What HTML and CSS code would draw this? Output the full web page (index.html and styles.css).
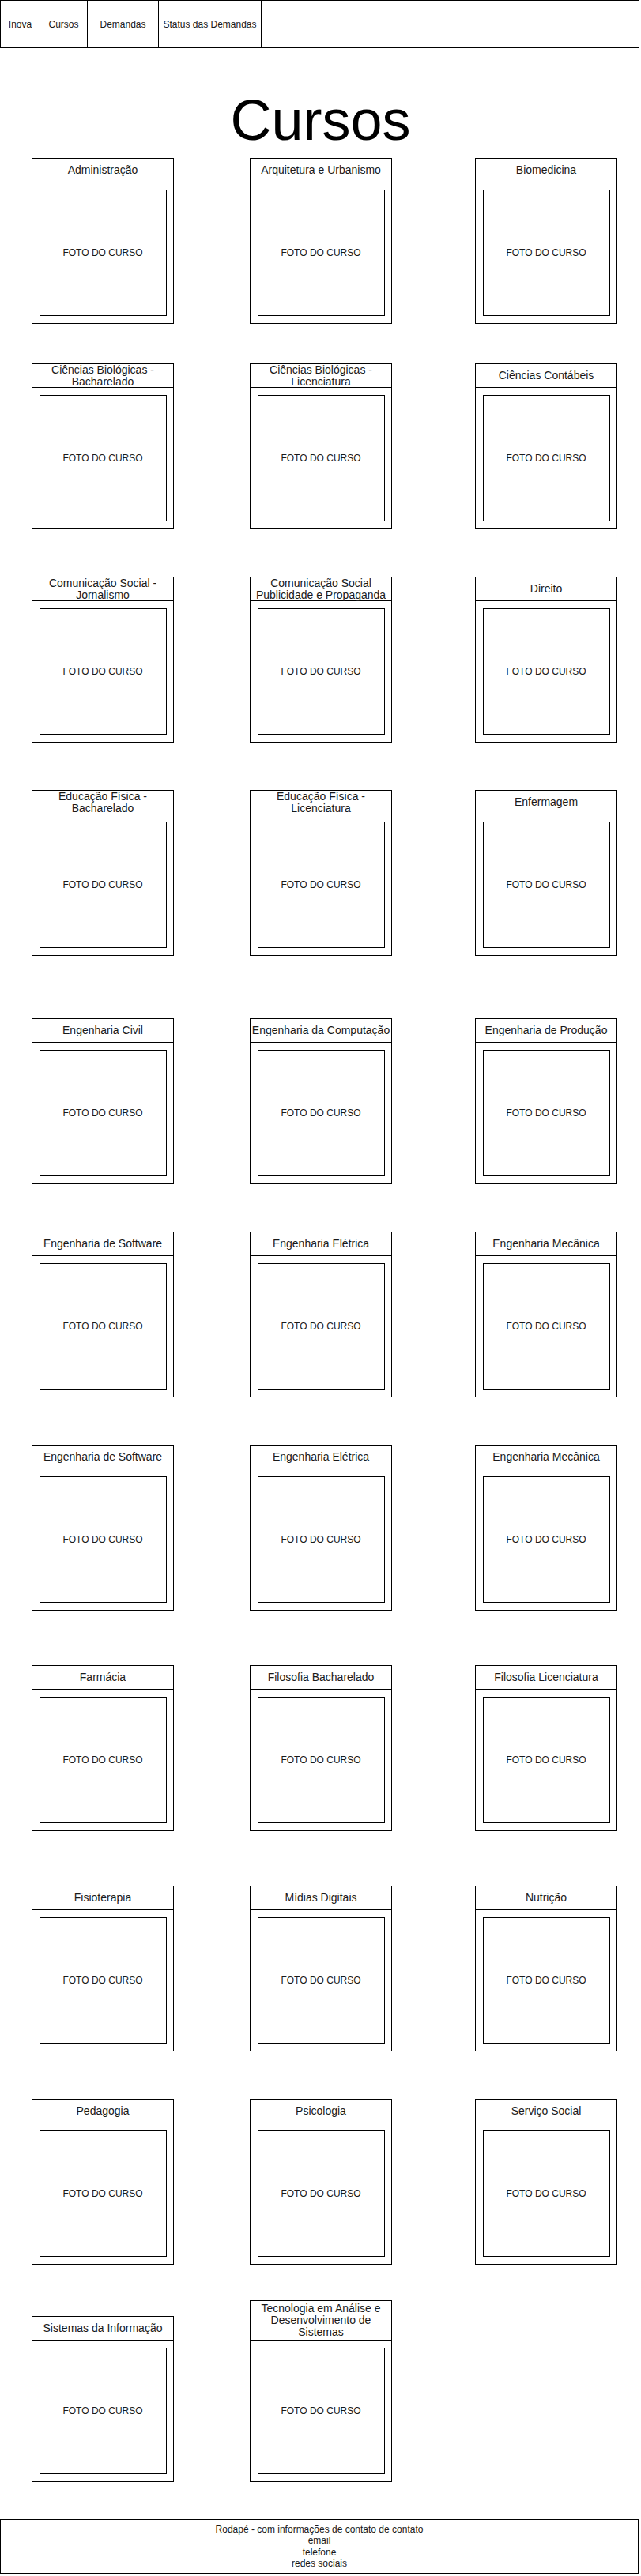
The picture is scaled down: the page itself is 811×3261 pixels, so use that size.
FILE: index.html
```html
<!DOCTYPE html>
<html lang="pt-BR">
<head>
<meta charset="utf-8">
<title>Cursos</title>
<link rel="stylesheet" href="styles.css">
</head>
<body>
<div class="topnav">
	<a class="navitem nav-inova" href="#">Inova</a>
	<a class="navitem nav-cursos" href="#">Cursos</a>
	<a class="navitem nav-demandas" href="#">Demandas</a>
	<a class="navitem nav-status" href="#">Status das Demandas</a>
	<div class="navitem nav-rest"></div>
</div>

<h1 class="pagetitle">Cursos</h1>

<!-- lista de cursos, tres por linha -->
<div class="row first">
	<div class="card"><div class="card-head">Administração</div><div class="card-body"><div class="photo">FOTO DO CURSO</div></div></div>
	<div class="card"><div class="card-head">Arquitetura e Urbanismo</div><div class="card-body"><div class="photo">FOTO DO CURSO</div></div></div>
	<div class="card"><div class="card-head">Biomedicina</div><div class="card-body"><div class="photo">FOTO DO CURSO</div></div></div>
</div>
<div class="row near">
	<div class="card"><div class="card-head">Ciências Biológicas - Bacharelado</div><div class="card-body"><div class="photo">FOTO DO CURSO</div></div></div>
	<div class="card"><div class="card-head">Ciências Biológicas - Licenciatura</div><div class="card-body"><div class="photo">FOTO DO CURSO</div></div></div>
	<div class="card"><div class="card-head">Ciências Contábeis</div><div class="card-body"><div class="photo">FOTO DO CURSO</div></div></div>
</div>
<div class="row">
	<div class="card"><div class="card-head">Comunicação Social - Jornalismo</div><div class="card-body"><div class="photo">FOTO DO CURSO</div></div></div>
	<div class="card"><div class="card-head">Comunicação Social Publicidade e Propaganda</div><div class="card-body"><div class="photo">FOTO DO CURSO</div></div></div>
	<div class="card"><div class="card-head">Direito</div><div class="card-body"><div class="photo">FOTO DO CURSO</div></div></div>
</div>
<div class="row">
	<div class="card"><div class="card-head">Educação Física - Bacharelado</div><div class="card-body"><div class="photo">FOTO DO CURSO</div></div></div>
	<div class="card"><div class="card-head">Educação Física - Licenciatura</div><div class="card-body"><div class="photo">FOTO DO CURSO</div></div></div>
	<div class="card"><div class="card-head">Enfermagem</div><div class="card-body"><div class="photo">FOTO DO CURSO</div></div></div>
</div>
<div class="row far">
	<div class="card"><div class="card-head">Engenharia Civil</div><div class="card-body"><div class="photo">FOTO DO CURSO</div></div></div>
	<div class="card"><div class="card-head">Engenharia da Computação</div><div class="card-body"><div class="photo">FOTO DO CURSO</div></div></div>
	<div class="card"><div class="card-head">Engenharia de Produção</div><div class="card-body"><div class="photo">FOTO DO CURSO</div></div></div>
</div>
<div class="row">
	<div class="card"><div class="card-head">Engenharia de Software</div><div class="card-body"><div class="photo">FOTO DO CURSO</div></div></div>
	<div class="card"><div class="card-head">Engenharia Elétrica</div><div class="card-body"><div class="photo">FOTO DO CURSO</div></div></div>
	<div class="card"><div class="card-head">Engenharia Mecânica</div><div class="card-body"><div class="photo">FOTO DO CURSO</div></div></div>
</div>
<div class="row">
	<div class="card"><div class="card-head">Engenharia de Software</div><div class="card-body"><div class="photo">FOTO DO CURSO</div></div></div>
	<div class="card"><div class="card-head">Engenharia Elétrica</div><div class="card-body"><div class="photo">FOTO DO CURSO</div></div></div>
	<div class="card"><div class="card-head">Engenharia Mecânica</div><div class="card-body"><div class="photo">FOTO DO CURSO</div></div></div>
</div>
<div class="row wide">
	<div class="card"><div class="card-head">Farmácia</div><div class="card-body"><div class="photo">FOTO DO CURSO</div></div></div>
	<div class="card"><div class="card-head">Filosofia Bacharelado</div><div class="card-body"><div class="photo">FOTO DO CURSO</div></div></div>
	<div class="card"><div class="card-head">Filosofia Licenciatura</div><div class="card-body"><div class="photo">FOTO DO CURSO</div></div></div>
</div>
<div class="row wide">
	<div class="card"><div class="card-head">Fisioterapia</div><div class="card-body"><div class="photo">FOTO DO CURSO</div></div></div>
	<div class="card"><div class="card-head">Mídias Digitais</div><div class="card-body"><div class="photo">FOTO DO CURSO</div></div></div>
	<div class="card"><div class="card-head">Nutrição</div><div class="card-body"><div class="photo">FOTO DO CURSO</div></div></div>
</div>
<div class="row">
	<div class="card"><div class="card-head">Pedagogia</div><div class="card-body"><div class="photo">FOTO DO CURSO</div></div></div>
	<div class="card"><div class="card-head">Psicologia</div><div class="card-body"><div class="photo">FOTO DO CURSO</div></div></div>
	<div class="card"><div class="card-head">Serviço Social</div><div class="card-body"><div class="photo">FOTO DO CURSO</div></div></div>
</div>
<div class="row last">
	<div class="card"><div class="card-head">Sistemas da Informação</div><div class="card-body"><div class="photo">FOTO DO CURSO</div></div></div>
	<div class="card"><div class="card-head tall">Tecnologia em Análise e Desenvolvimento de Sistemas</div><div class="card-body"><div class="photo">FOTO DO CURSO</div></div></div>
</div>

<div class="footer">
	Rodapé - com informações de contato de contato<br>
	email<br>
	telefone<br>
	redes sociais
</div>
</body>
</html>
```

FILE: styles.css
```css
html, body {
    margin: 0;
    padding: 0;
    background: #ffffff;
}
body {
    font-family: "Liberation Sans", Arial, Helvetica, sans-serif;
    color: #1a1a1a;
}

/* barra de navegacao */
.topnav {
    display: flex;
    box-sizing: border-box;
    width: 809px;
    height: 61px;
    border: 1px solid #000000;
}
.navitem {
    display: flex;
    align-items: center;
    justify-content: center;
    box-sizing: border-box;
    height: 100%;
    border-right: 1px solid #000000;
    font-size: 12px;
    color: #1a1a1a;
    text-decoration: none;
    white-space: nowrap;
}
.nav-inova { width: 50px; }
.nav-cursos { width: 60px; }
.nav-demandas { width: 90px; }
.nav-status { width: 130px; }
.nav-rest {
    flex: 1;
    border-right: 0;
}

.pagetitle {
    margin: 55px 0 0 0;
    font-size: 72px;
    line-height: 72px;
    font-weight: normal;
    text-align: center;
    color: #000000;
}

/* linhas de cursos - as colunas nao tem espaco igual no desenho */
.row {
    display: grid;
    grid-template-columns: 276px 285px 180px;
    align-items: end;
    padding-left: 40px;
    margin-top: 60px;
}
.row.first { margin-top: 12px; }
.row.near { margin-top: 50px; }
.row.far { margin-top: 79px; }
.row.wide { margin-top: 69px; }
.row.last { margin-top: 45px; }

.card {
    box-sizing: border-box;
    width: 180px;
    border: 1px solid #000000;
}
.card-head {
    display: flex;
    align-items: center;
    justify-content: center;
    height: 29px;
    border-bottom: 1px solid #000000;
    font-size: 14px;
    line-height: 15px;
    text-align: center;
}
.card-head.tall {
    height: 49px;
}
.card-body {
    padding: 9px 0;
}
.photo {
    display: flex;
    align-items: center;
    justify-content: center;
    box-sizing: border-box;
    width: 161px;
    height: 160px;
    margin: 0 auto;
    border: 1px solid #000000;
    font-size: 12px;
}

.footer {
    box-sizing: border-box;
    width: 808px;
    height: 69px;
    margin-top: 47px;
    padding-top: 5px;
    border: 1px solid #000000;
    font-size: 12px;
    line-height: 14.4px;
    text-align: center;
}
```
